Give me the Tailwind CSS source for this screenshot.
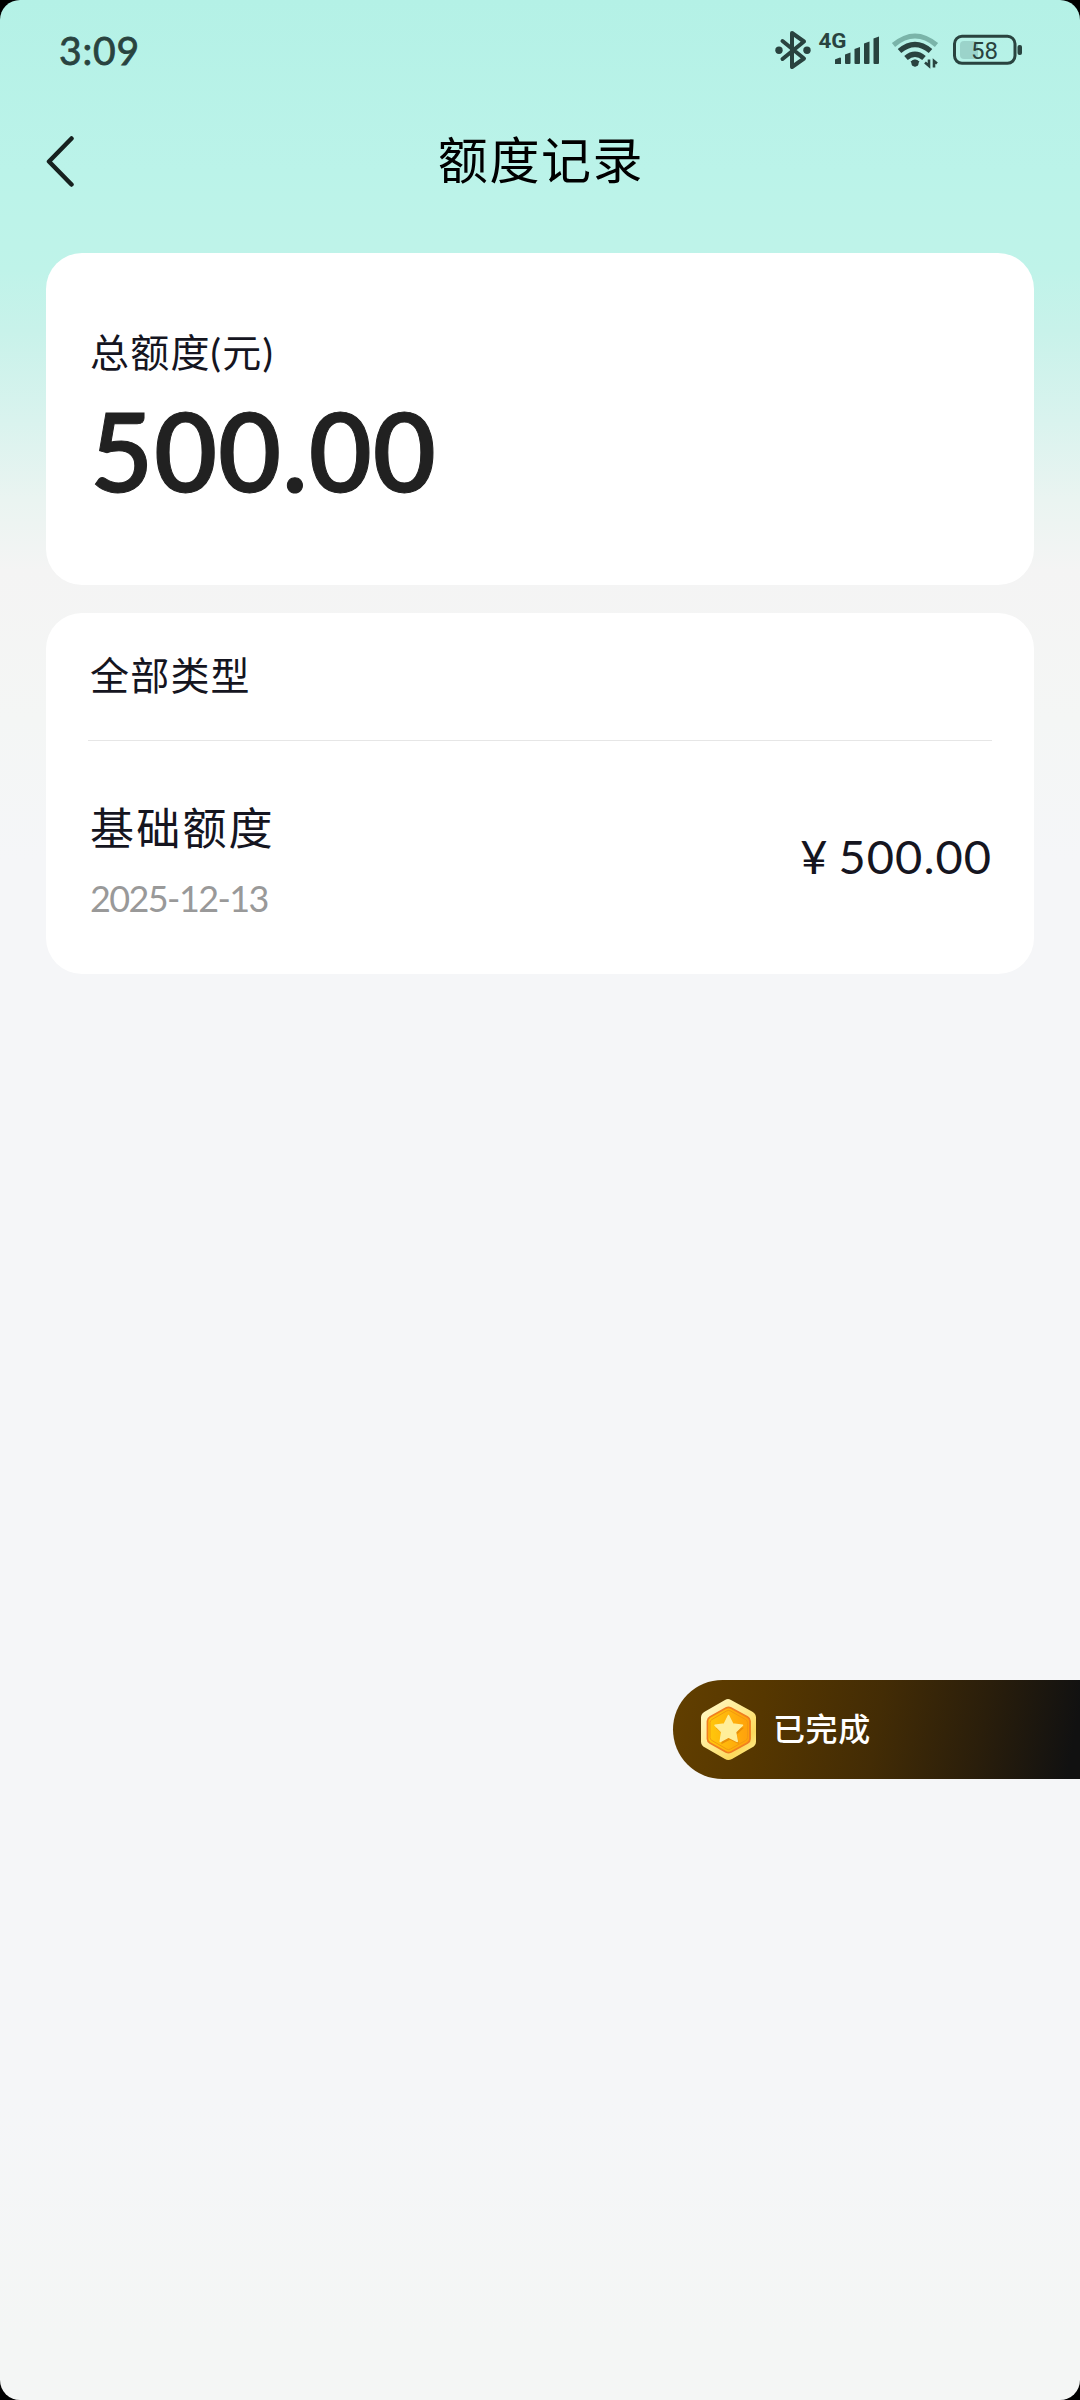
<!DOCTYPE html>
<html lang="zh-CN">
<head>
<meta charset="utf-8">
<title>额度记录</title>
<script src="https://cdn.jsdelivr.net/npm/@tailwindcss/browser@4"></script>
</head>
<body class="bg-black">
<div class="relative flex h-[2400px] w-[1080px] flex-col overflow-hidden rounded-[20px] bg-[linear-gradient(180deg,#b4f1e6_0px,#bbf3e9_170px,#bff3e9_270px,#c8f2ea_330px,#d9f3ee_420px,#eaf4f1_500px,#f4f4f4_570px,#f4f6f5_720px,#f5f6f8_860px,#f5f6f8_2100px,#f4f6f5_2340px)] font-['Lato','Noto_Sans_CJK_SC',sans-serif] text-[#15151f]">
  <!-- Status bar -->
  <header class="flex h-[100px] items-center justify-between pr-[58px] pl-[59px] text-[#29433f]">
    <span class="text-[39px] leading-[100px] font-normal tracking-[0.800px] [-webkit-text-stroke:0.800px_currentColor]">3:09</span>
    <svg class="h-[60px] w-[262px]" viewBox="760 20 262 60" fill="none" stroke="#29433f">
      <path d="M782.500 41L804 58.500l-12 8.500V33l12 8.500L782.500 59" stroke-width="4" stroke-linejoin="round" stroke-linecap="round"/>
      <g fill="#29433f" stroke="none">
        <circle cx="779" cy="50.300" r="3.700"/><circle cx="807" cy="50.300" r="3.700"/>
        <text x="818.500" y="47.500" font-size="21" font-weight="700" font-family="Roboto, sans-serif" textLength="28" lengthAdjust="spacingAndGlyphs">4G</text>
        <path d="M835 60q0-1 1-1l4-1.500q1 0 1 1V64h-6z"/>
        <path d="M845 54.500l5.500-2V63q0 1-1 1h-3.500q-1 0-1-1z"/>
        <path d="M854.500 49l5.500-2V63q0 1-1 1h-3.500q-1 0-1-1z"/>
        <path d="M864 43.500l5.500-2V63q0 1-1 1H865q-1 0-1-1z"/>
        <path d="M873.500 38.500l5.500-2V63q0 1-1 1h-3.500q-1 0-1-1z"/>
        <circle cx="915" cy="63" r="3.600"/>
        <path d="M910.500 61.500q4.500-3.500 9 0L915 67z"/>
      </g>
      <path d="M893.500 45Q915 27 936.500 45" stroke="#7ab4a9" stroke-width="5"/>
      <path d="M899.500 51Q915 38 930.500 51" stroke-width="5.500"/>
      <path d="M906 58Q915 50.500 924 58" stroke-width="5.500"/>
      <path d="M929 59.500V66l-4-3.500M934 67.500V61l3 2.500" stroke-width="2.600"/>
      <rect x="960" y="41" width="18" height="18" rx="4" fill="#9bd3ca" stroke="none"/>
      <rect x="954.500" y="36.300" width="60.500" height="27" rx="7.500" stroke-width="3"/>
      <rect x="1017.500" y="45" width="4.500" height="10" rx="2" fill="#29433f" stroke="none"/>
      <text x="984.500" y="58.500" text-anchor="middle" font-size="24" font-family="Roboto, sans-serif" fill="#29433f" stroke="none">58</text>
    </svg>
  </header>

  <!-- Title bar -->
  <nav class="flex h-[153px] items-start px-[46px] pt-[24px]">
    <svg class="mt-[10px] h-[56px] w-[30px]" viewBox="0 0 30 56" fill="none" stroke="#17211f" stroke-width="4.500" stroke-linecap="round" stroke-linejoin="round"><path d="M25.500 4.500L3 27.500l22.500 23"/></svg>
    <h1 class="flex-1 pr-[28px] text-center text-[50px] leading-[72px] font-normal tracking-[1.600px] text-black">额度记录</h1>
  </nav>

  <main class="flex flex-col gap-[28px] px-[46px]">
    <section class="h-[332px] rounded-[36px] bg-white px-[44px] pt-[69px]">
      <p class="text-[39px] leading-[60px] tracking-[1.200px]">总额度(元)</p>
      <p class="mt-[3px] text-[109px] leading-[130px] font-semibold tracking-[0.800px] text-[#212121] [-webkit-text-stroke:1px_currentColor]">500.00</p>
    </section>
    <section class="flex h-[361px] flex-col rounded-[36px] bg-white px-[42px]">
      <h2 class="h-[128px] border-b border-[#e6e6e6] pt-[32px] pl-[2px] text-[39px] leading-[60px] font-normal tracking-[1.200px]">全部类型</h2>
      <div class="flex items-center justify-between pt-[54px]">
        <div class="pl-[2px]">
          <p class="text-[44px] leading-[66px] tracking-[2.200px]">基础额度</p>
          <p class="mt-[13px] -mb-[5px] text-[36px] leading-[48px] tracking-[-1.600px] text-[#999]">2025-12-13</p>
        </div>
        <p class="text-[47px] leading-[60px] tracking-[1px] [word-spacing:-3px]">¥ 500.00</p>
      </div>
    </section>
  </main>

  <!-- Floating task badge -->
  <aside class="absolute top-[1680px] right-0 flex h-[99px] w-[407px] items-center rounded-l-full bg-[linear-gradient(100deg,#623f00_0%,#563700_22%,#432c05_50%,#2a1e0b_75%,#111111_97%)] pl-[27px]">
    <svg class="h-[64px] w-[58px]" viewBox="0 0 58 64">
      <defs>
        <linearGradient id="rim" x1="0" y1="0" x2="1" y2="1"><stop offset="0" stop-color="#fffbd0"/><stop offset=".5" stop-color="#ffe98a"/><stop offset=".75" stop-color="#fbd95c"/><stop offset="1" stop-color="#fff2a0"/></linearGradient>
        <linearGradient id="core" x1="0" y1="0" x2="1" y2="0"><stop offset="0" stop-color="#ffc90b"/><stop offset="1" stop-color="#ff9f0c"/></linearGradient>
      </defs>
      <path d="M25 2q3-2 6 0l21 11.500q4 2 4 6v24q0 4-4 6L32 61q-4 2-7 0L5 49.500q-4-2-4-6v-24q0-4 4-6z" fill="url(#rim)"/>
      <path d="M26 10q2.500-1.400 5 0L47.500 19q2.500 1.500 2.500 4v18q0 2.500-2.500 4L31 54q-2.500 1.400-5 0L10 45q-2.500-1.500-2.500-4V23q0-2.500 2.500-4z" fill="url(#core)" stroke="#f07f20" stroke-width="1.800"/>
      <path d="M26.500 13q2-1.200 4 0l15 8.500q2 1 2 3v15q0 2-2 3l-15 8.500q-2 1.200-4 0L12 42.500q-2-1-2-3v-15q0-2 2-3z" fill="none" stroke="#f29a10" stroke-width="1"/>
      <path d="M30 20l4.400 8.500 9.600 1.200-7 6.800 1.800 9.500-8.800-4.300-8.700 4.500 1.600-9.700-6.900-6.500 9.500-1.500z" fill="#e98f08"/>
      <path d="M28.500 17.500l4.300 8.600 9.700 1.100-7 6.800 1.800 9.500-8.800-4.300-8.300 4.300 1.500-9.500-6.700-6.800 9.300-1.100z" fill="#ffee9a" stroke="#ffee9a" stroke-width="1.500" stroke-linejoin="round"/>
    </svg>
    <span class="-mt-[2px] ml-[15px] text-[32px] leading-[48px] font-medium tracking-[0.600px] text-white">已完成</span>
  </aside>
</div>
</body>
</html>
